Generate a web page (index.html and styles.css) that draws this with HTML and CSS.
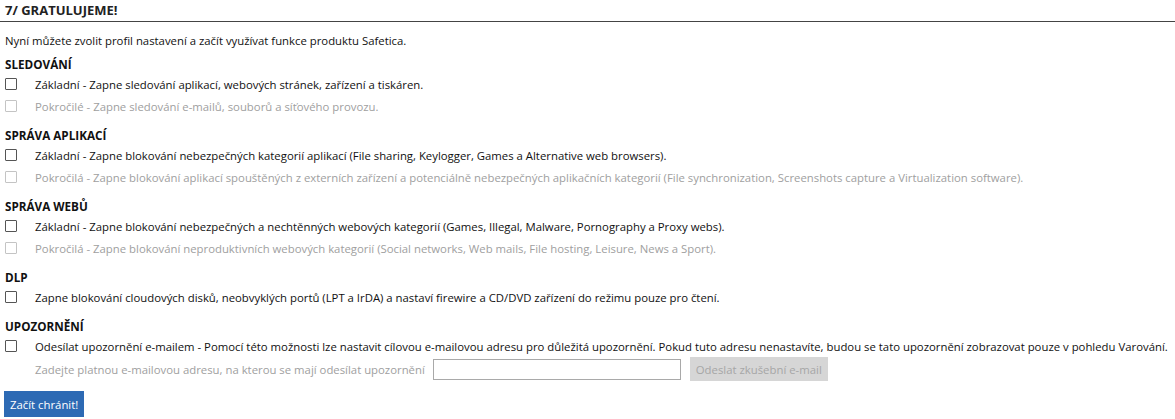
FILE: index.html
```html
<!DOCTYPE html>
<html lang="cs">
<head>
    <meta charset="UTF-8">
    <title>Gratulujeme</title>
    <link rel="stylesheet" href="styles.css">
</head>
<body>
    <h1 class="title">7/ GRATULUJEME!</h1>
    <p class="intro">Nyní můžete zvolit profil nastavení a začít využívat funkce produktu Safetica.</p>

    <section class="group">
        <h2>SLEDOVÁNÍ</h2>
        <label class="option"><span class="box"></span>Základní - Zapne sledování aplikací, webových stránek, zařízení a tiskáren.</label>
        <label class="option disabled"><span class="box"></span>Pokročilé - Zapne sledování e-mailů, souborů a síťového provozu.</label>
    </section>

    <section class="group">
        <h2>SPRÁVA APLIKACÍ</h2>
        <label class="option"><span class="box"></span>Základní - Zapne blokování nebezpečných kategorií aplikací (File sharing, Keylogger, Games a Alternative web browsers).</label>
        <label class="option disabled"><span class="box"></span>Pokročilá - Zapne blokování aplikací spouštěných z externích zařízení a potenciálně nebezpečných aplikačních kategorií (File synchronization, Screenshots capture a Virtualization software).</label>
    </section>

    <section class="group">
        <h2>SPRÁVA WEBŮ</h2>
        <label class="option"><span class="box"></span>Základní - Zapne blokování nebezpečných a nechtěnných webových kategorií (Games, Illegal, Malware, Pornography a Proxy webs).</label>
        <label class="option disabled"><span class="box"></span>Pokročilá - Zapne blokování neproduktivních webových kategorií (Social networks, Web mails, File hosting, Leisure, News a Sport).</label>
    </section>

    <section class="group">
        <h2>DLP</h2>
        <label class="option"><span class="box"></span>Zapne blokování cloudových disků, neobvyklých portů (LPT a IrDA) a nastaví firewire a CD/DVD zařízení do režimu pouze pro čtení.</label>
    </section>

    <section class="group">
        <h2>UPOZORNĚNÍ</h2>
        <label class="option"><span class="box"></span>Odesílat upozornění e-mailem - Pomocí této možnosti lze nastavit cílovou e-mailovou adresu pro důležitá upozornění. Pokud tuto adresu nenastavíte, budou se tato upozornění zobrazovat pouze v pohledu Varování.</label>
        <div class="email-row">
            <span class="email-label">Zadejte platnou e-mailovou adresu, na kterou se mají odesílat upozornění</span>
            <input class="email-input" type="text">
            <button class="test-btn" disabled>Odeslat zkušební e-mail</button>
        </div>
    </section>

    <button class="start-btn">Začít chránit!</button>
</body>
</html>
```

FILE: styles.css
```css
body {
    margin: 0;
    font-family: "Open Sans", "Noto Sans", sans-serif;
    font-size: 11.35px;
    color: #111;
    background: #fff;
}
.title {
    margin: 0;
    padding: 2px 5px 0;
    height: 19px;
    line-height: 17px;
    font-size: 13px;
    font-weight: bold;
    color: #222;
    border-bottom: 1px solid #444;
}
.intro {
    margin: 10px 5px 0;
    line-height: 18px;
}
.group {
    margin: 5px 5px 0;
}
.group + .group {
    margin-top: 9px;
}
h2 {
    margin: 0;
    font-size: 11.7px;
    line-height: 18px;
    font-weight: bold;
    color: #111;
}
.option {
    display: flex;
    align-items: center;
    height: 22px;
    white-space: nowrap;
}
.box {
    width: 10px;
    height: 10px;
    border: 1px solid #555;
    border-radius: 1px;
    margin-right: 18px;
    flex-shrink: 0;
}
.disabled {
    color: #a0a0a0;
}
.disabled .box {
    border-color: #c4c4c4;
}
.email-row {
    display: flex;
    align-items: center;
    height: 24px;
    padding-left: 30px;
    color: #a0a0a0;
}
.email-input {
    margin: 0 0 0 8px;
    width: 244px;
    height: 17px;
    border: 1px solid #a9a9a9;
    padding: 1px;
}
.test-btn {
    margin-left: 9px;
    height: 24px;
    padding: 0 6px;
    border: none;
    background: #d6d6d6;
    color: #a6a6a6;
    font-family: inherit;
    font-size: 11.35px;
}
.start-btn {
    margin: 10px 0 0 4px;
    height: 26px;
    padding: 0 6px;
    border: none;
    background: #2d6ab4;
    color: #fff;
    font-family: inherit;
    font-size: 11.35px;
}
```
